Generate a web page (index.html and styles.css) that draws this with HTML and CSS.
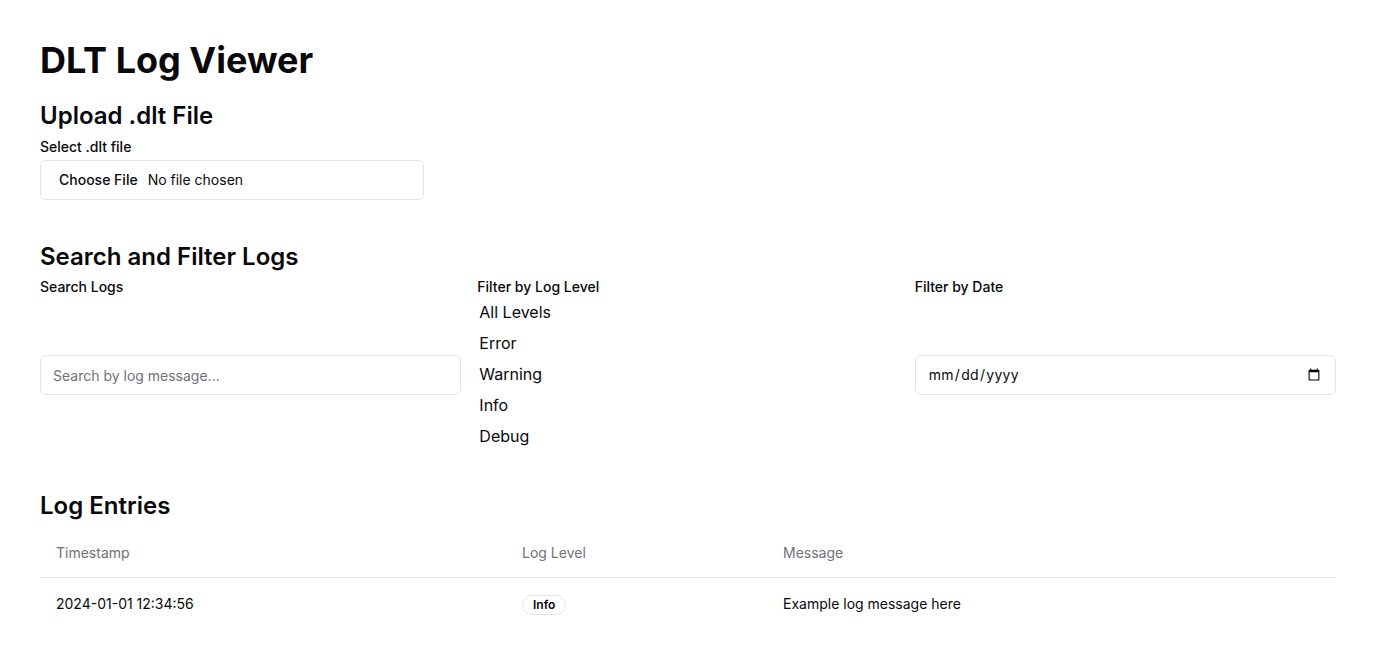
FILE: index.html
```html
<!DOCTYPE html>
<html lang="en">
<head>
<meta charset="utf-8">
<title>DLT Log Viewer</title>
<link rel="stylesheet" href="styles.css">
</head>
<body>
<main class="page">
  <h1 class="title">DLT Log Viewer</h1>

  <section class="upload">
    <h2 class="heading">Upload .dlt File</h2>
    <label class="label" for="file">Select .dlt file</label>
    <input class="input file-input" id="file" type="file" accept=".dlt">
  </section>

  <section class="filters">
    <h2 class="heading">Search and Filter Logs</h2>
    <div class="filter-grid">
      <div class="field">
        <label class="label" for="search">Search Logs</label>
        <div class="field-body">
          <input class="input" id="search" type="text" placeholder="Search by log message...">
        </div>
      </div>
      <div class="field">
        <label class="label">Filter by Log Level</label>
        <ul class="level-list">
          <li>All Levels</li>
          <li>Error</li>
          <li>Warning</li>
          <li>Info</li>
          <li>Debug</li>
        </ul>
      </div>
      <div class="field">
        <label class="label" for="date">Filter by Date</label>
        <div class="field-body">
          <input class="input date-input" id="date" type="date">
        </div>
      </div>
    </div>
  </section>

  <section class="entries">
    <h2 class="heading">Log Entries</h2>
    <table class="table">
      <colgroup>
        <col class="col-ts">
        <col class="col-level">
        <col>
      </colgroup>
      <thead>
        <tr>
          <th>Timestamp</th>
          <th>Log Level</th>
          <th>Message</th>
        </tr>
      </thead>
      <tbody>
        <tr>
          <td>2024-01-01 12:34:56</td>
          <td><span class="badge">Info</span></td>
          <td>Example log message here</td>
        </tr>
      </tbody>
    </table>
  </section>
</main>
</body>
</html>
```

FILE: styles.css
```css
* { box-sizing: border-box; }

html, body {
  margin: 0;
  background: #ffffff;
}

body {
  font-family: Inter, "Noto Sans", "Liberation Sans", sans-serif;
  color: #09090b;
}

.page {
  padding: 40px;
}

.title {
  margin: 0 0 20px;
  font-size: 36px;
  line-height: 40px;
  font-weight: 700;
}

.heading {
  margin: 0 0 8px;
  font-size: 24px;
  line-height: 32px;
  font-weight: 600;
}

.label {
  display: block;
  font-size: 14px;
  line-height: 14px;
  font-weight: 500;
  color: #09090b;
}

.upload .label {
  margin-bottom: 6px;
}

.input {
  display: flex;
  width: 100%;
  height: 40px;
  padding: 8px 12px;
  border: 1px solid #e4e4e7;
  border-radius: 6px;
  background: #ffffff;
  font-family: inherit;
  font-size: 14px;
  line-height: 20px;
  color: #09090b;
  outline: none;
}

.input::placeholder {
  color: #71717a;
}

.date-input {
  display: block;
  letter-spacing: 0.3px;
}

.date-input::-webkit-calendar-picker-indicator {
  margin-right: 0;
}

.file-input {
  width: 384px;
  padding-top: 9px;
}

.file-input::file-selector-button {
  border: 0;
  background: transparent;
  font-family: inherit;
  font-size: 14px;
  font-weight: 500;
  color: #09090b;
  padding: 1px 6px;
  margin-right: 4px;
}

.upload {
  margin-bottom: 41px;
}

.filters .heading {
  margin-bottom: 7px;
}

.filter-grid {
  display: grid;
  grid-template-columns: repeat(3, 1fr);
  gap: 16px;
}

.field {
  display: flex;
  flex-direction: column;
}

.field-body {
  flex: 1;
  display: flex;
  align-items: center;
  padding-top: 4px;
}

.level-list {
  list-style: none;
  margin: 3px 0 0;
  padding: 0 0 0 2px;
}

.level-list li {
  font-size: 16px;
  line-height: 31px;
  height: 31px;
  color: #09090b;
}

.filters {
  margin-bottom: 38px;
}

.entries .heading {
  margin-bottom: 7px;
}

.table {
  width: 100%;
  border-collapse: collapse;
  font-size: 14px;
  table-layout: fixed;
}

.col-ts { width: 466px; }
.col-level { width: 261px; }

.table th {
  height: 48px;
  padding: 0 16px;
  text-align: left;
  font-weight: 400;
  color: #71717a;
  vertical-align: middle;
}

.table thead tr {
  border-bottom: 1px solid #e4e4e7;
}

.table td {
  padding: 16px;
  line-height: 20px;
  vertical-align: middle;
}

.badge {
  display: inline-flex;
  align-items: center;
  padding: 1px 10px;
  border: 1px solid #e4e4e7;
  border-radius: 9999px;
  font-size: 12px;
  line-height: 16px;
  font-weight: 600;
  color: #09090b;
}
```
